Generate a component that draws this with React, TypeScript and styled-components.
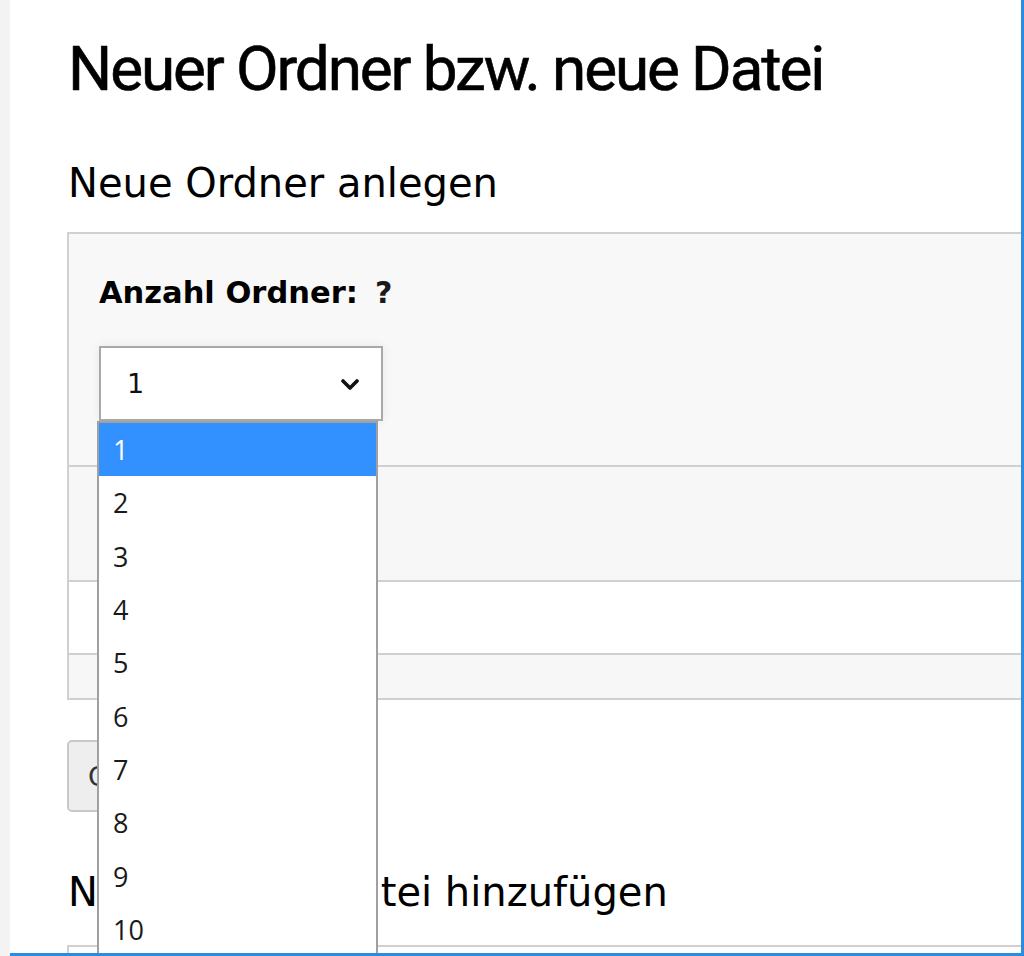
import React from "react";
import styled, { createGlobalStyle } from "styled-components";

const GlobalStyle = createGlobalStyle`
  html, body { margin: 0; padding: 0; background: #ffffff; }
  body { font-family: "DejaVu Sans", Verdana, sans-serif; color: #000; }
  * { box-sizing: border-box; }
`;

const Window = styled.div`
  display: flex;
  width: 1024px;
  height: 956px;
  overflow: hidden;
  background: #ffffff;
`;

const Sidebar = styled.div`
  flex: 0 0 10px;
  background: #f3f3f3;
`;

const Main = styled.main`
  position: relative;
  flex: 1;
  overflow: hidden;
  padding: 38px 0 0 57px;
  border-right: 3px solid #2b8de2;
  border-bottom: 3px solid #2b8de2;
`;

const Title = styled.h1`
  margin: 0;
  font-family: Roboto, "Liberation Sans", sans-serif;
  font-weight: 400;
  font-size: 62px;
  line-height: 62px;
  letter-spacing: -2.1px;
  color: #000;
  padding-left: 1px;
  -webkit-text-stroke: 0.6px #000;
`;

const SectionTitle = styled.h2<{ $top: number }>`
  margin: ${(p) => p.$top}px 0 0 0;
  font-family: "DejaVu Sans", Verdana, sans-serif;
  font-weight: 400;
  font-size: 40px;
  line-height: 40px;
  padding-left: 1px;
  color: #000;
  white-space: nowrap;
`;

const Panel = styled.section<{ $top: number }>`
  margin-top: ${(p) => p.$top}px;
  width: calc(100% + 40px);
  border: 2px solid #d0d0d0;
  background: #f8f8f8;
`;

const PanelRow = styled.div<{ $h: number; $tone: "gray" | "white" }>`
  height: ${(p) => p.$h}px;
  background: ${(p) => (p.$tone === "white" ? "#ffffff" : "#f7f7f7")};
  & + & { border-top: 2px solid #d0d0d0; }
`;

const FieldRow = styled(PanelRow)`
  display: flex;
  flex-direction: column;
  align-items: flex-start;
  padding: 44px 0 0 30px;
  background: #f8f8f8;
`;

const FieldLabel = styled.label`
  display: flex;
  align-items: baseline;
  gap: 17px;
  font-family: "DejaVu Sans", Verdana, sans-serif;
  font-weight: 700;
  font-size: 30.5px;
  line-height: 29px;
  color: #000;
`;

const Help = styled.span`
  font-weight: 700;
  font-size: 30px;
  color: #1a1a1a;
`;

const SelectBox = styled.div`
  margin-top: 39px;
  width: 284px;
  height: 75px;
  display: flex;
  align-items: center;
  justify-content: space-between;
  padding: 0 22px 0 26px;
  background: #ffffff;
  border: 2px solid #a9a9a9;
  box-shadow: 0 0 10px rgba(0, 0, 0, 0.07);
`;

const SelectValue = styled.span`
  font-family: "DejaVu Sans", Verdana, sans-serif;
  font-size: 27px;
  color: #111;
`;

const Chevron = styled.svg`
  width: 18px;
  height: 12px;
  margin-top: 2px;
`;

const Button = styled.button`
  display: block;
  margin-top: 40px;
  height: 72px;
  padding: 0 22px 0 19px;
  background: #eeeeee;
  border: 2px solid #c9c9c9;
  border-radius: 5px;
  font-family: "DejaVu Sans", Verdana, sans-serif;
  font-size: 27px;
  color: #333;
`;

const Dropdown = styled.ul`
  position: absolute;
  left: 87px;
  top: 421px;
  width: 281px;
  margin: 0;
  padding: 0;
  list-style: none;
  background: #ffffff;
  border: 2px solid #a0a0a0;
  border-bottom: none;
`;

const Option = styled.li<{ $active?: boolean }>`
  height: 53.3px;
  display: flex;
  align-items: center;
  padding-left: 14px;
  font-family: "Open Sans", "Noto Sans", sans-serif;
  font-size: 27px;
  background: ${(p) => (p.$active ? "#3391ff" : "#ffffff")};
  color: ${(p) => (p.$active ? "#ffffff" : "#1a1a1a")};
`;

const options = ["1", "2", "3", "4", "5", "6", "7", "8", "9", "10"];

export default function App() {
  return (
    <>
      <GlobalStyle />
      <Window>
        <Sidebar />
        <Main>
          <Title>Neuer Ordner bzw. neue Datei</Title>
          <SectionTitle $top={63}>Neue Ordner anlegen</SectionTitle>
          <Panel $top={29}>
            <FieldRow $h={231} $tone="gray">
              <FieldLabel>
                Anzahl Ordner:
                <Help>?</Help>
              </FieldLabel>
              <SelectBox>
                <SelectValue>1</SelectValue>
                <Chevron viewBox="0 0 18 12">
                  <polyline
                    points="2,2 9,9 16,2"
                    fill="none"
                    stroke="#111"
                    strokeWidth="3.6"
                    strokeLinecap="round"
                    strokeLinejoin="round"
                  />
                </Chevron>
              </SelectBox>
            </FieldRow>
            <PanelRow $h={115} $tone="gray" />
            <PanelRow $h={73} $tone="white" />
            <PanelRow $h={45} $tone="gray" />
          </Panel>
          <Button type="button">Ordner anlegen</Button>
          <SectionTitle $top={60}>Neue Mediendatei hinzufügen</SectionTitle>
          <Panel $top={33}>
            <PanelRow $h={120} $tone="white" />
          </Panel>
          <Dropdown role="listbox">
            {options.map((o) => (
              <Option key={o} $active={o === "1"} role="option">
                {o}
              </Option>
            ))}
          </Dropdown>
        </Main>
      </Window>
    </>
  );
}
